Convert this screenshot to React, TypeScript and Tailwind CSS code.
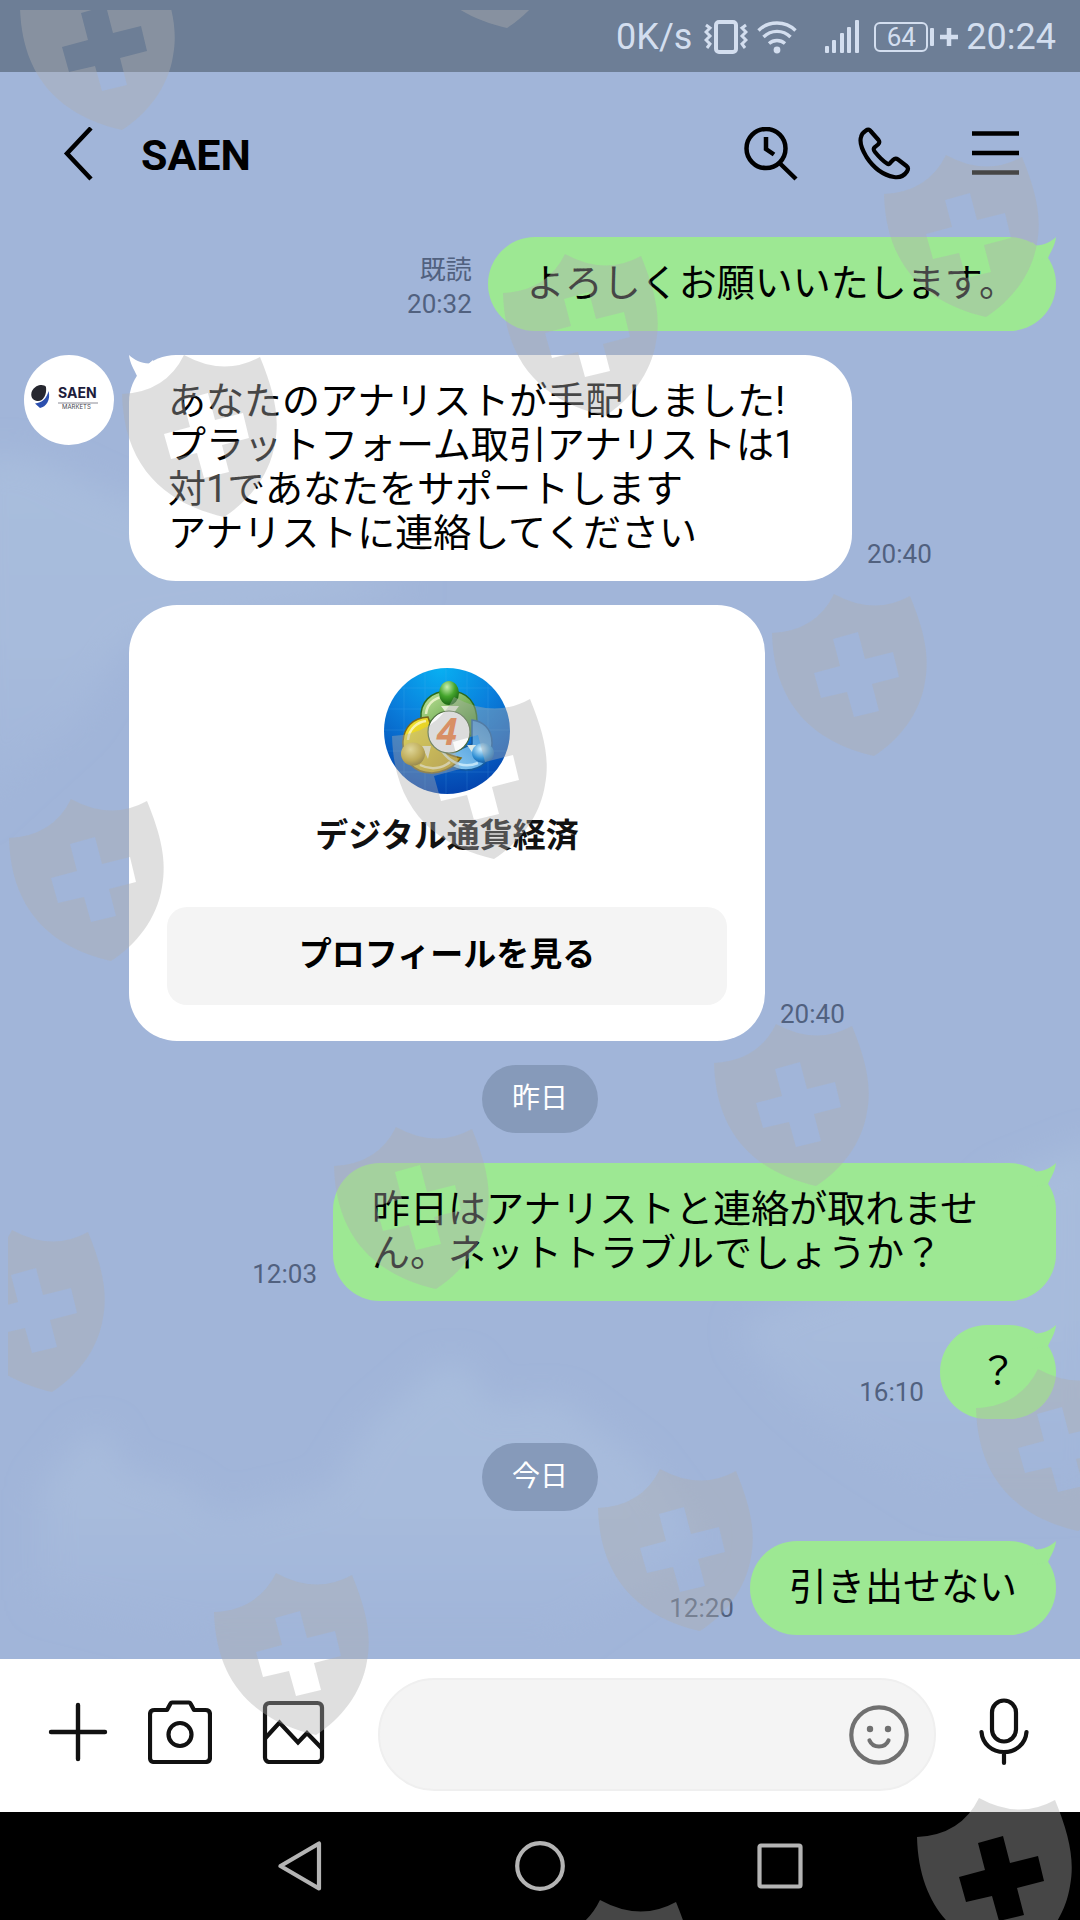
import React from 'react';

type IconProps = { className?: string };

const BackIcon: React.FC<IconProps> = ({ className }) => (
  <svg viewBox="0 0 30 54" fill="none" stroke="currentColor" strokeWidth={4.5} className={className}>
    <path d="M28 1 4 26.500 28 52" />
  </svg>
);

const SearchClockIcon: React.FC<IconProps> = ({ className }) => (
  <svg viewBox="0 0 54 54" fill="none" stroke="currentColor" strokeWidth={4.5} className={className}>
    <circle cx="22" cy="21.5" r="19.5" />
    <path d="M22 10v12l8 5.5M35.5 36 52 52" />
  </svg>
);

const PhoneIcon: React.FC<IconProps> = ({ className }) => (
  <svg viewBox="0 0 54 54" fill="none" stroke="currentColor" strokeWidth={4.2} strokeLinejoin="round" className={className}>
    <path d="M8 3.5C10.5 1.5 12 3 13 4.5L20.5 13C22 15 21.5 16 20 17.5L17 20C15 21.5 15.5 23 17 25 21 30 25 34 29 36.5 30.5 37.5 31.5 37 32.5 35.5L35 33C36.5 31.5 38 31 40 32.5L48.5 39C50.5 40.5 50.5 42 49 44.5 46 49 42 51 36 50 25 48 15 40 8.5 30 3 21 1.5 15 3 10 3.5 7.5 5 5.5 8 3.5Z" />
  </svg>
);

const MenuIcon: React.FC<IconProps> = ({ className }) => (
  <svg viewBox="0 0 48 54" fill="none" stroke="currentColor" strokeWidth={4.5} className={className}>
    <path d="M0 6.5h47M0 26h47M0 45.5h47" />
  </svg>
);

const VibrateIcon: React.FC<IconProps> = ({ className }) => (
  <svg viewBox="0 0 44 34" fill="none" stroke="currentColor" className={className}>
    <rect x="12" y="2" width="20" height="30" rx="3" strokeWidth={4} />
    <path d="M2 5 6 8 2 12l4 4-4 4 4 4-3 4M42 5l-4 3 4 4-4 4 4 4-4 4 3 4" strokeWidth={3} />
  </svg>
);

const WifiIcon: React.FC<IconProps> = ({ className }) => (
  <svg viewBox="0 0 40 34" fill="none" stroke="currentColor" strokeWidth={3.4} className={className}>
    <path d="M1.5 10.5C11.5.5 28.5.5 38.5 10.5" />
    <path d="M6.5 17C14 9.5 26 9.5 33.5 17M12 23.5C16.5 19.5 23.5 19.5 28 23.5" />
    <circle cx="20" cy="30" r="3.4" fill="currentColor" stroke="none" />
  </svg>
);

const SignalIcon: React.FC<IconProps> = ({ className }) => (
  <svg viewBox="0 0 36 34" fill="currentColor" className={className}>
    <rect x="1" y="26" width="4" height="7" rx="1" />
    <rect x="8" y="20" width="4" height="13" rx="1" />
    <rect x="16" y="13" width="4" height="20" rx="1" />
    <rect x="23" y="7" width="4" height="26" rx="1" />
    <rect x="31" y="0" width="4" height="33" rx="1" />
  </svg>
);

const PlusIcon: React.FC<IconProps> = ({ className }) => (
  <svg viewBox="0 0 64 64" fill="none" stroke="currentColor" strokeWidth={4.4} strokeLinecap="round" className={className}>
    <path d="M32 5v54M5 32h54" />
  </svg>
);

const CameraIcon: React.FC<IconProps> = ({ className }) => (
  <svg viewBox="0 0 64 64" fill="none" stroke="currentColor" strokeWidth={4.2} strokeLinejoin="round" className={className}>
    <path d="M6.5 10H19l3.5-6.5q.5-1 1.5-1H41q1 0 1.5 1L46 10h11.500Q62 10 62 14.500v43q0 4.500-4.500 4.500h-51Q2 62 2 57.500v-43Q2 10 6.500 10Z" />
    <circle cx="32" cy="34.5" r="11.5" />
  </svg>
);

const GalleryIcon: React.FC<IconProps> = ({ className }) => (
  <svg viewBox="0 0 64 64" fill="none" stroke="currentColor" strokeWidth={4.2} className={className}>
    <rect x="3" y="3" width="57" height="59" rx="4.5" />
    <path d="M3 38.5 17.5 22.5 36 42.5 45 33 60 48.5" />
  </svg>
);

const SmileIcon: React.FC<IconProps> = ({ className }) => (
  <svg viewBox="0 0 60 60" fill="none" stroke="currentColor" strokeWidth={4.2} strokeLinecap="round" className={className}>
    <circle cx="30" cy="30" r="27.7" />
    <path d="M20.5 35.5C24 43.5 36 43.5 39.5 35.5" />
    <circle cx="21" cy="24" r="3.2" fill="currentColor" stroke="none" />
    <circle cx="39" cy="24" r="3.2" fill="currentColor" stroke="none" />
  </svg>
);

const MicIcon: React.FC<IconProps> = ({ className }) => (
  <svg viewBox="0 0 50 68" fill="none" stroke="currentColor" strokeWidth={4.2} strokeLinecap="round" className={className}>
    <rect x="13" y="2.5" width="24" height="41" rx="12" />
    <path d="M2.5 34C3.5 46 13 54 25 54S46.5 46 47.5 34M25 54v11" />
  </svg>
);

const SaenLogo: React.FC = () => (
  <svg viewBox="0 0 90 90" role="img" aria-label="SAEN MARKETS" className="size-[90px] shrink-0 rounded-full bg-white">
    <path d="M8 36C12 29 20 29 22 32 23 40 19 47 13 46 8 45 6 41 8 36Z" fill="#26272f" />
    <path d="M11 48.5C18 48 23 43 24.5 36 27 45 22 52 16 53Z" fill="#2c4fae" />
    <text x="34" y="43" fontSize="14" fontWeight="700" fill="#1c1c3c" fontFamily="Inter, sans-serif">SAEN</text>
    <path d="M34 48h40" stroke="#70707c" strokeWidth=".8" />
    <text x="38" y="54" fontSize="6" fill="#44444e" fontFamily="Inter, sans-serif">MARKETS</text>
  </svg>
);

const AnalystLogo: React.FC = () => (
  <svg viewBox="0 0 126 126" role="img" aria-label="デジタル通貨経済" className="size-[126px] rounded-full">
    <defs>
      <radialGradient id="sky" cx=".45" cy="0" r="1">
        <stop offset="0" stopColor="#08b0f2" />
        <stop offset=".45" stopColor="#0a7fdc" />
        <stop offset="1" stopColor="#0444ae" />
      </radialGradient>
      <linearGradient id="green" x1="0" y1="0" x2="1" y2="1">
        <stop offset="0" stopColor="#c5e7a0" />
        <stop offset="1" stopColor="#36841f" />
      </linearGradient>
      <linearGradient id="yellow" x1="0" y1="0" x2="1" y2="1">
        <stop offset="0" stopColor="#f8ea2c" />
        <stop offset="1" stopColor="#b99518" />
      </linearGradient>
      <linearGradient id="blue" x1="1" y1="0" x2="0" y2="1">
        <stop offset="0" stopColor="#2f86d2" />
        <stop offset="1" stopColor="#9ad4f5" />
      </linearGradient>
      <radialGradient id="greenHead" cx=".4" cy=".25" r=".8">
        <stop offset="0" stopColor="#c9efb0" />
        <stop offset=".5" stopColor="#44a52c" />
        <stop offset="1" stopColor="#145c10" />
      </radialGradient>
      <radialGradient id="yellowHead" cx=".4" cy=".3" r=".8">
        <stop offset="0" stopColor="#fff08a" />
        <stop offset=".6" stopColor="#c9aa20" />
        <stop offset="1" stopColor="#75600d" />
      </radialGradient>
      <radialGradient id="blueHead" cx=".4" cy=".3" r=".8">
        <stop offset="0" stopColor="#d0f0ff" />
        <stop offset=".6" stopColor="#2f8fd4" />
        <stop offset="1" stopColor="#0c4a94" />
      </radialGradient>
    </defs>
    <rect width="126" height="126" fill="url(#sky)" />
    <path d="M0 20h126M0 41h126M0 62h126M0 83h126M0 104h126M20 0v126M41 0v126M62 0v126M83 0v126M104 0v126" stroke="#5cbcf5" strokeWidth=".7" opacity=".25" />
    <path d="M37 50C36 35 46 23 65 23S93 35 93 54C93 62 91 66 87 68L65 60Z" fill="url(#green)" stroke="#2b6b1c" strokeWidth="1.5" />
    <path d="M88 52C98 53 108 60 108 75 108 92 98 102 82 102 68 102 56 92 52 80L70 84 88 76Z" fill="url(#blue)" stroke="#145a9e" strokeWidth="1.5" />
    <path d="M44 49C28 50 20 60 19 73 18 92 30 105 48 105 60 104 70 99 77 90 68 88 55 84 53 76Z" fill="url(#yellow)" stroke="#7b671a" strokeWidth="1.5" />
    <path d="M42 46C43 34 53 28 65 28M24 72C25 60 34 54 42 53M36 97C46 102 58 101 66 94" fill="none" stroke="#fffde0" strokeWidth="2.5" opacity=".7" />
    <path d="M58 83C68 97 82 100 94 95" fill="none" stroke="#e0f6ff" strokeWidth="2.5" opacity=".7" />
    <path d="M38 78h9l-3 13ZM83 77h9l-2 10ZM57 38h18l-9 12Z" fill="#f2f4e6" opacity=".85" />
    <ellipse cx="65" cy="25" rx="10" ry="12" fill="url(#greenHead)" />
    <ellipse cx="29" cy="86" rx="12" ry="11.5" fill="url(#yellowHead)" />
    <ellipse cx="99" cy="85" rx="11" ry="10" fill="url(#blueHead)" />
    <circle cx="65" cy="64" r="21" fill="#fafafa" stroke="#4c6b3c" strokeWidth="1.2" />
    <text x="63" y="77" fontSize="37" fontWeight="700" fontStyle="italic" textAnchor="middle" fill="#f47a35" fontFamily="Open Sans, sans-serif">4</text>
  </svg>
);

// Soft clouds behind the conversation
const Sky: React.FC = () => (
  <svg aria-hidden="true" className="absolute inset-0 h-full w-full">
    <defs>
      <filter id="soft" x="-20%" y="-20%" width="140%" height="140%">
        <feGaussianBlur stdDeviation="16" />
      </filter>
      <linearGradient id="cloud" x1="0" y1="0" x2="0" y2="1">
        <stop offset="0" stopColor="#a8bddd" />
        <stop offset=".5" stopColor="#a7bbdc" />
        <stop offset="1" stopColor="#a1b5d9" />
      </linearGradient>
    </defs>
    <g filter="url(#soft)" fill="url(#cloud)">
      <path d="M-30 460C30 440 70 480 130 500L420 590 130 640 80 720-30 820Z" />
      <path d="M40 1600V1490L85 1435 105 1430 125 1470 180 1485 220 1515 330 1490 370 1425 440 1365 465 1365 490 1405 560 1400 640 1460 700 1540 560 1640 200 1640Z" />
      <path d="M740 1330C800 1280 900 1300 1000 1180L1100 1140V1500H940C880 1460 800 1420 740 1330Z" />
    </g>
  </svg>
);

const SHIELDS: [number, number][] = [
  [82, -32], [467, -134], [946, 155], [565, 254], [184, 355], [454, 697],
  [71, 799], [834, 594], [776, 1024], [396, 1127], [12, 1230], [1038, 1369],
  [660, 1469], [276, 1573], [979, 1798], [600, 1900],
];

const ShieldLayer: React.FC = () => (
  <svg aria-hidden="true" className="pointer-events-none absolute inset-0 h-full w-full">
    <defs>
      <clipPath id="frame">
        <rect x="8" y="10" width="1072" height="1910" />
      </clipPath>
      <path
        id="shield"
        fillRule="evenodd"
        d="M0 0Q40 22 76 2C90 36 96 62 91 88 86 120 65 146 40 162-12 150-60 118-62 39Q-18 37 0 0ZM-1 45 24 38 31 65 59 58 65 83 38 90 45 117 20 123 13 98-13 104-20 79 6 72Z"
      />
    </defs>
    <g clipPath="url(#frame)" fill="#afafaf" fillOpacity=".4">
      {SHIELDS.map(([x, y]) => (
        <use key={`${x}-${y}`} href="#shield" x={x} y={y} />
      ))}
    </g>
  </svg>
);

const Meta: React.FC<{ time: string; read?: boolean }> = ({ time, read }) => (
  <div className="shrink-0 pb-[10px] text-right text-[26px] leading-[34px] text-[#51617f]">
    {read && <div>既読</div>}
    <time>{time}</time>
  </div>
);

const Tail: React.FC<IconProps> = ({ className }) => (
  <svg viewBox="0 0 24 30" fill="currentColor" className={`absolute top-0 h-[30px] w-[24px] ${className}`}>
    <path d="M0 5 4 8.5C12 8 19 5 24 0 23 9 19 14 16 21L0 24Z" />
  </svg>
);

const Sent: React.FC<{ text: string; time: string; read?: boolean }> = ({ text, time, read }) => (
  <div className="flex items-end justify-end gap-4">
    <Meta time={time} read={read} />
    <div className="relative max-w-[723px] rounded-[47px] bg-[#9de893] px-[39px] pt-6 pb-[26px] text-[38px] leading-[44px] text-black">
      <Tail className="right-0 text-[#9de893]" />
      <p>{text}</p>
    </div>
  </div>
);

const DatePill: React.FC<{ label: string }> = ({ label }) => (
  <div className="mb-1.5 self-center rounded-full bg-[#869aba] px-[30px] py-[14px] text-[28px] leading-[40px] text-white">
    {label}
  </div>
);

const StatusBar: React.FC = () => (
  <div className="flex h-[72px] items-center justify-end bg-[#6d7e96] pt-[12px] pr-6 pb-[10px] text-[36px] leading-[48px] text-[#d3deef]">
    <span>0K/s</span>
    <VibrateIcon className="ml-3 h-[34px] w-[44px]" />
    <WifiIcon className="ml-[9px] h-[34px] w-[40px]" />
    <SignalIcon className="ml-[27px] h-[34px] w-[36px]" />
    <span className="ml-[14px] flex h-[30px] w-[54px] items-center justify-center rounded-[6px] border-2 border-current text-[26px] leading-[26px]">
      64
    </span>
    <span className="ml-[2px] h-[18px] w-[4px] rounded-[1px] bg-current" />
    <svg viewBox="0 0 18 18" stroke="currentColor" strokeWidth={4.5} className="ml-[6px] size-[18px]">
      <path d="M9 0v18M0 9h18" />
    </svg>
    <span className="ml-2">20:24</span>
  </div>
);

const Header: React.FC = () => (
  <header className="flex h-[165px] items-center pr-[60px] pb-[2px] pl-[63px] text-black">
    <button aria-label="戻る">
      <BackIcon className="h-[54px] w-[30px]" />
    </button>
    <h1 className="ml-12 pt-[3px] text-[43px] leading-[54px] font-bold">SAEN</h1>
    <nav className="ml-auto flex items-center gap-[60px]">
      <button aria-label="検索">
        <SearchClockIcon className="size-[54px]" />
      </button>
      <button aria-label="通話">
        <PhoneIcon className="size-[54px]" />
      </button>
      <button aria-label="メニュー">
        <MenuIcon className="h-[54px] w-[48px]" />
      </button>
    </nav>
  </header>
);

const Composer: React.FC = () => (
  <form className="flex h-[153px] items-center bg-white pr-[51px] pb-[8px] pl-[46px] text-[#111]">
    <button type="button" aria-label="追加">
      <PlusIcon className="size-[64px]" />
    </button>
    <button type="button" aria-label="カメラ" className="ml-[38px]">
      <CameraIcon className="size-[64px]" />
    </button>
    <button type="button" aria-label="画像" className="ml-[50px]">
      <GalleryIcon className="size-[64px]" />
    </button>
    <div className="mt-[6px] ml-[52px] flex h-[113px] min-w-0 flex-1 items-center rounded-full border-2 border-[#efefef] bg-[#f4f4f4] pr-[25px] pl-10">
      <input aria-label="メッセージ" className="min-w-0 flex-1 bg-transparent text-[38px] outline-none" />
      <button type="button" aria-label="スタンプ" className="text-[#707070]">
        <SmileIcon className="size-[60px]" />
      </button>
    </div>
    <button type="button" aria-label="音声" className="ml-[43px]">
      <MicIcon className="h-[68px] w-[50px]" />
    </button>
  </form>
);

const NavBar: React.FC = () => (
  <nav className="flex h-[108px] items-center justify-center gap-[190px] bg-black text-[#b4b4b4]">
    <button aria-label="Back">
      <svg viewBox="0 0 50 50" fill="none" stroke="currentColor" strokeWidth={4.2} strokeLinejoin="round" className="size-[50px]">
        <path d="M44 2.5v45L5.500 25Z" />
      </svg>
    </button>
    <button aria-label="Home">
      <svg viewBox="0 0 50 50" fill="none" stroke="currentColor" strokeWidth={4.2} className="size-[50px]">
        <circle cx="25" cy="25" r="22.8" />
      </svg>
    </button>
    <button aria-label="Recent apps">
      <svg viewBox="0 0 50 50" fill="none" stroke="currentColor" strokeWidth={4.2} className="size-[50px]">
        <rect x="4.5" y="4.5" width="41" height="41" rx="1.5" />
      </svg>
    </button>
  </nav>
);

const App: React.FC = () => {
  return (
    <div className="relative flex min-h-screen flex-col overflow-hidden bg-[#a1b5d9] font-['Roboto','Noto_Sans_CJK_JP',sans-serif]">
      <Sky />
      <div className="relative flex flex-1 flex-col">
        <StatusBar />
        <Header />

        {/* Conversation */}
        <main className="flex flex-1 flex-col gap-6 px-6 pb-6">
          <Sent text="よろしくお願いいたします。" time="20:32" read />

          <div className="flex items-start gap-[15px]">
            <SaenLogo />
            <div className="flex flex-col gap-6">
              <div className="flex items-end gap-[15px]">
                <div className="relative max-w-[723px] rounded-[47px] bg-white px-[39px] pt-6 pb-[26px] text-[38px] leading-[44px] text-black">
                  <Tail className="left-0 -scale-x-100 text-white" />
                  <p className="whitespace-pre-line">
                    {'あなたのアナリストが手配しました!\nプラットフォーム取引アナリストは1対1であなたをサポートします\nアナリストに連絡してください'}
                  </p>
                </div>
                <Meta time="20:40" />
              </div>

              <div className="flex items-end gap-[15px]">
                <div className="flex w-[636px] flex-col items-center rounded-[48px] bg-white px-[38px] pt-[63px] pb-[36px]">
                  <AnalystLogo />
                  <h2 className="mt-[18px] text-[33px] leading-[48px] font-bold text-[#111]">デジタル通貨経済</h2>
                  <button className="mt-[47px] h-[98px] w-full rounded-[20px] bg-[#f4f4f4] pb-0.5 text-[33px] leading-[48px] font-bold text-black">
                    プロフィールを見る
                  </button>
                </div>
                <Meta time="20:40" />
              </div>
            </div>
          </div>

          <DatePill label="昨日" />
          <Sent text="昨日はアナリストと連絡が取れません。ネットトラブルでしょうか？" time="12:03" />
          <Sent text="？" time="16:10" />
          <DatePill label="今日" />
          <Sent text="引き出せない" time="12:20" />
        </main>

        <Composer />
        <NavBar />
      </div>
      <ShieldLayer />
    </div>
  );
};

export default App;
